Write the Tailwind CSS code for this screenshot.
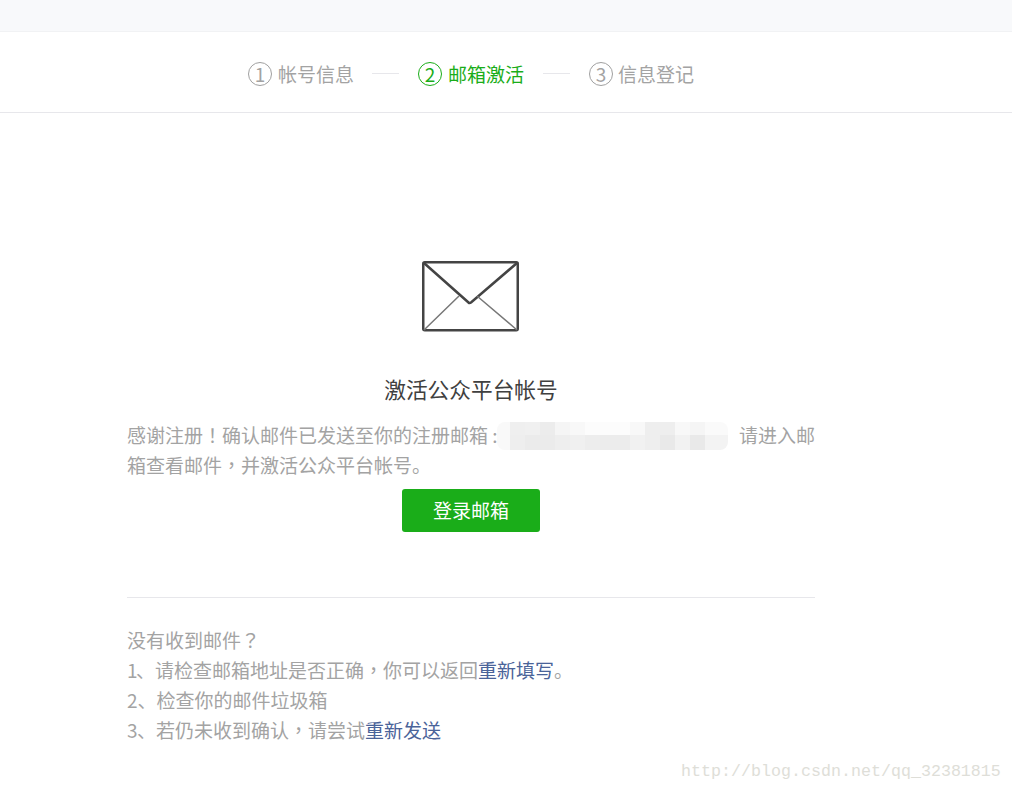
<!DOCTYPE html>
<html lang="zh-CN">
<head>
  <meta charset="UTF-8" />
  <title>邮箱激活</title>
  <script src="https://cdn.jsdelivr.net/npm/@tailwindcss/browser@4"></script>
</head>
<body class="relative h-[792px] w-[1012px] overflow-hidden bg-white font-['Noto_Sans_CJK_SC','Noto_Sans',sans-serif] font-normal">
  <div class="h-[32px] border-b border-[#f1f2f4] bg-[#f8f9fb]"></div>

  <header class="h-[81px] border-b border-[#e7e7eb]">
    <div class="ml-[127px] flex h-[80px] w-[688px] items-center pt-[4px] pl-[121px] text-[19px] text-[#a3a3a3]">
      <div class="flex items-center">
        <span class="flex h-[24px] w-[24px] items-center justify-center rounded-full border border-[#a0a0a0] text-[19px]">1</span>
        <span class="ml-[6px]">帐号信息</span>
      </div>
      <div class="mr-[19px] ml-[18px] mb-[2px] h-px w-[27px] bg-[#e7e7eb]"></div>
      <div class="flex items-center text-[#1aad19]">
        <span class="flex h-[24px] w-[24px] items-center justify-center rounded-full border border-[#1aad19] text-[19px]">2</span>
        <span class="ml-[6px]">邮箱激活</span>
      </div>
      <div class="mx-[19px] mb-[2px] h-px w-[27px] bg-[#e7e7eb]"></div>
      <div class="flex items-center">
        <span class="flex h-[24px] w-[24px] items-center justify-center rounded-full border border-[#a0a0a0] text-[19px]">3</span>
        <span class="ml-[5px]">信息登记</span>
      </div>
    </div>
  </header>

  <main class="ml-[127px] w-[688px]">
    <div class="flex justify-center pt-[148px]">
      <svg class="ml-[-1px]" width="97" height="71" viewBox="0 0 97 71" fill="none">
        <rect x="1.25" y="1.25" width="94.5" height="68" rx="1.5" stroke="#444444" stroke-width="2.5" />
        <path d="M2 2 L46.5 41.5 Q47.5 42.5 49 41.5 L95 2" stroke="#444444" stroke-width="2.5" />
        <path d="M2 69 L37 35 M95 69 L55 35" stroke="#777777" stroke-width="1.5" />
      </svg>
    </div>

    <h2 class="mt-[42px] text-center text-[21.7px] leading-[30px] text-[#404040]">激活公众平台帐号</h2>

    <p class="mt-[16px] text-[19px] leading-[30px] text-[#a3a3a3]">
      <span class="flex h-[30px] items-center">
        <span class="whitespace-nowrap">感谢注册<span lang="zh-TW" class="font-['Noto_Sans_CJK_TC']">！</span>确认邮件已发送至你的注册邮箱 :</span>
        <span class="ml-auto whitespace-nowrap">请进入邮</span>
      </span>
      <span class="block">箱查看邮件<span lang="zh-TW" class="font-['Noto_Sans_CJK_TC']">，</span>并激活公众平台帐号。</span>
    </p>

    <!-- blurred out address -->
    <div class="absolute top-[422px] left-[497px] grid h-[28px] w-[231px] grid-flow-col grid-cols-[13px_repeat(13,15px)_23px] grid-rows-[13px_15px] overflow-hidden rounded-[8px]">
      <div class="bg-[#f9f9f9]"></div><div class="bg-[#f9f9f9]"></div>
      <div class="bg-[#efefef]"></div><div class="bg-[#eeeeee]"></div>
      <div class="bg-[#f0f0f0]"></div><div class="bg-[#ebebeb]"></div>
      <div class="bg-[#ececec]"></div><div class="bg-[#ebebeb]"></div>
      <div class="bg-[#f5f5f5]"></div><div class="bg-[#eeeeee]"></div>
      <div class="bg-[#f8f8f8]"></div><div class="bg-[#f0f0f0]"></div>
      <div class="bg-[#fcfcfc]"></div><div class="bg-[#ededed]"></div>
      <div class="bg-[#fcfcfc]"></div><div class="bg-[#ececec]"></div>
      <div class="bg-[#fcfcfc]"></div><div class="bg-[#ececec]"></div>
      <div class="bg-[#f8f8f8]"></div><div class="bg-[#f1f1f1]"></div>
      <div class="bg-[#eeeeee]"></div><div class="bg-[#eeeeee]"></div>
      <div class="bg-[#eeeeee]"></div><div class="bg-[#e9e9e9]"></div>
      <div class="bg-[#f8f8f8]"></div><div class="bg-[#f2f2f2]"></div>
      <div class="bg-[#f5f5f5]"></div><div class="bg-[#e9e9e9]"></div>
      <div class="bg-[#fafafa]"></div><div class="bg-[#f3f3f3]"></div>
    </div>

    <div class="mt-[9px] flex justify-center">
      <a class="flex h-[43px] w-[138px] items-center justify-center rounded-[3px] bg-[#1aad19] text-[19px] text-white">登录邮箱</a>
    </div>

    <div class="mt-[65px] border-t border-[#e7e7eb] pt-[27px] text-[19px] leading-[30px] text-[#a3a3a3]">
      <p>没有收到邮件<span lang="zh-TW" class="font-['Noto_Sans_CJK_TC']">？</span></p>
      <p><span class="inline-block w-[9px]">1</span>、请检查邮箱地址是否正确<span lang="zh-TW" class="font-['Noto_Sans_CJK_TC']">，</span>你可以返回<a class="text-[#4a6399]">重新填写</a>。</p>
      <p>2、检查你的邮件垃圾箱</p>
      <p><span class="inline-block w-[10px]">3</span>、若仍未收到确认<span lang="zh-TW" class="font-['Noto_Sans_CJK_TC']">，</span>请尝试<a class="text-[#4a6399]">重新发送</a></p>
    </div>
  </main>

  <div class="absolute top-[762px] left-[681px] font-['Liberation_Mono',monospace] text-[16.67px] leading-[20px] text-[#deded8]">http://blog.csdn.net/qq_32381815</div>
</body>
</html>
